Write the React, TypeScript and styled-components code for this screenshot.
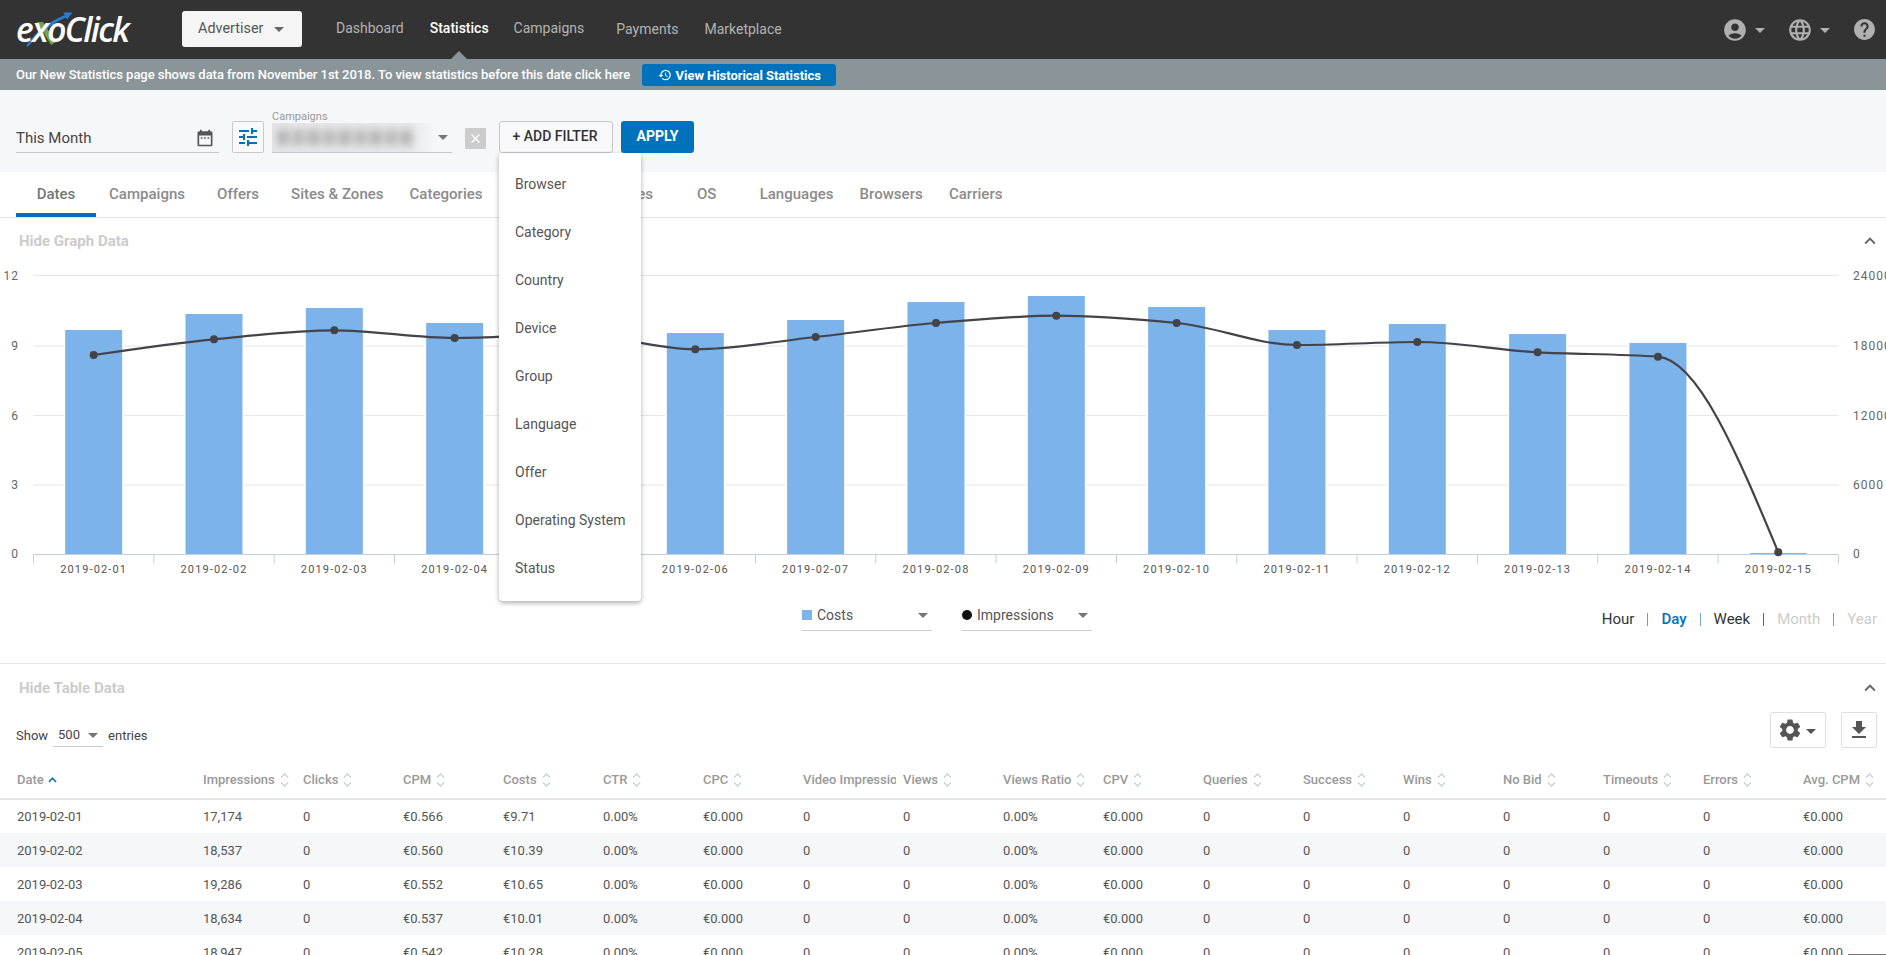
import React from "react";
import styled, { createGlobalStyle } from "styled-components";
import { MdAccountCircle, MdLanguage, MdHelp, MdSettings, MdFileDownload, MdTune, MdHistory, MdDateRange, MdClose, MdExpandLess } from "react-icons/md";

const Global = createGlobalStyle`
  html, body { margin: 0; padding: 0; height: 100%; overflow: hidden; background: #fff; }
  body { font-family: Roboto, "Liberation Sans", sans-serif; color: #444; }
  * { box-sizing: border-box; }
  #root { height: 100%; }
`;

const Page = styled.div`width: 1886px; height: 955px; overflow: hidden; position: relative; background: #fff;`;

const Header = styled.header`
  height: 59px; background: #333; display: flex; align-items: center; padding: 0 9px 0 16px;
`;
const LogoWrap = styled.div`
  position: relative; width: 166px; height: 40px; flex: none;
  svg { position: absolute; left: 0; top: 0; }
`;
const LogoText = styled.span`
  position: absolute; left: 0; top: -3px; font-family: "Open Sans", sans-serif; font-style: italic; font-weight: 600;
  font-size: 33.5px; letter-spacing: -1.7px; color: #fff; line-height: 44px;
`;
const ModeButton = styled.button`
  width: 120px; height: 36px; border: 0; border-radius: 3px; background: #f5f5f5; color: #555;
  font: 400 14.4px Roboto, sans-serif; display: flex; align-items: center; gap: 11px; padding: 0 0 0 16px; margin-bottom: 2px;
`;
const Caret = styled.i<{ $w?: number; $c?: string }>`
  display: inline-block; width: 0; height: 0; flex: none; margin-top: 2px;
  border-left: ${(p) => (p.$w ?? 10) / 2}px solid transparent;
  border-right: ${(p) => (p.$w ?? 10) / 2}px solid transparent;
  border-top: ${(p) => ((p.$w ?? 10) * 0.55).toFixed(1)}px solid ${(p) => p.$c ?? "#666"};
`;
const Nav = styled.nav`display: flex; margin-left: 34px; gap: 26px; align-items: center; margin-bottom: 3px;`;
const NavItem = styled.a<{ $active?: boolean; $extra?: number; $drop?: number }>`
  position: relative; font-size: 14px; color: ${(p) => (p.$active ? "#fff" : "#b3b3b3")};
  font-weight: ${(p) => (p.$active ? 500 : 400)};
  margin-right: ${(p) => p.$extra ?? 0}px; top: ${(p) => p.$drop ?? 0}px;
  ${(p) => p.$active && `&::after { content: ""; position: absolute; left: 50%; margin-left: -9px; bottom: -24px; border: 9px solid transparent; border-top: 0; border-bottom-color: #8a9599; }`}
`;
const HeaderIcons = styled.div`margin-left: auto; display: flex; align-items: center; color: #b0b0b0; svg { display: block; }`;
const IconGroup = styled.div<{ $gap?: number }>`display: flex; align-items: center; gap: 7px; margin-right: ${(p) => p.$gap ?? 0}px;`;

const SubBar = styled.div`
  height: 31px; background: #8a9599; color: #fff; display: flex; align-items: center; padding-left: 16px;
  font-size: 13px; font-weight: 500; gap: 12px; letter-spacing: -0.045px;
`;
const HistoryBtn = styled.a`
  width: 194px; height: 22px; border-radius: 3px; background: #0072bc; color: #fff; font-weight: 700; font-size: 13px;
  display: flex; align-items: center; justify-content: center; gap: 4px; margin-top: 1px;
`;

const FilterBar = styled.div`
  height: 82px; background: #f6f7f9; display: flex; align-items: flex-end; padding: 0 0 19px 16px;
`;
const DateField = styled.div`
  width: 203px; height: 32px; border-bottom: 1px solid #c4c6c9; display: flex; align-items: center; justify-content: space-between;
  font-size: 15px; color: #444; padding: 2px 4px 0 0; svg { color: #555; }
`;
const SlidersBtn = styled.button`
  width: 32px; height: 32px; margin-left: 13px; background: #f9f9fb; border: 1px solid #c8c8c8; border-radius: 2px; color: #0072bc;
  padding: 0; display: flex; align-items: center; justify-content: center;
`;
const SelectWrap = styled.div`margin-left: 8px; width: 180px; position: relative;`;
const SelectLabel = styled.div`position: absolute; left: 0; top: -11px; font-size: 11px; color: #999; line-height: 14px; z-index: 1;`;
const SelectField = styled.div`
  height: 32px; border-bottom: 1px solid #c4c6c9; display: flex; align-items: center; padding-right: 4px; justify-content: space-between;
`;
const BlurBox = styled.div`
  width: 163px; height: 29px; margin-top: 1px; overflow: hidden; background: linear-gradient(90deg, #e6e6e8, #e9e9eb 85%, #f6f7f9);
`;
const BlurInk = styled.div`
  width: 135px; height: 15px; margin: 7px 6px; filter: blur(4px);
  background: repeating-linear-gradient(90deg, #a8a8a8 0 9px, #dadada 9px 15px, #b4b4b4 15px 26px, #e0e0e0 26px 31px);
`;
const ClearBtn = styled.button`
  width: 21px; height: 21px; margin: 0 0 4px 13px; background: #ccc; border: 0; border-radius: 1px; color: #fff; padding: 0;
  display: flex; align-items: center; justify-content: center;
`;
const AddWrap = styled.div`position: relative; margin-left: 13px;`;
const AddBtn = styled.button`
  width: 114px; height: 32px; background: #f9f9fb; border: 1px solid #c8c8c8; border-radius: 3px; color: #333;
  font: 500 14px Roboto, sans-serif; padding: 0 2px 2px 0; display: block;
`;
const ApplyBtn = styled.button`
  width: 73px; height: 32px; margin-left: 8px; background: #0072bc; border: 0; border-radius: 3px; color: #fff;
  font: 700 14px Roboto, sans-serif; padding: 0 0 2px;
`;
const Menu = styled.div`
  position: absolute; left: 0; top: 32px; width: 142px; height: 448px; background: #fff; border-radius: 4px; z-index: 10;
  box-shadow: 0 2px 5px rgba(0,0,0,.32); padding-top: 7px;
`;
const MenuItem = styled.div`height: 48px; line-height: 48px; padding-left: 16px; font-size: 14px; color: #555; white-space: nowrap;`;

const Tabs = styled.div`display: flex; height: 46px; padding-left: 16px; border-bottom: 1px solid #e4e4e4;`;
const Tab = styled.div<{ $active?: boolean }>`
  height: 45px; min-width: 80px; padding: 2px 13px 0; display: flex; align-items: center; justify-content: center;
  font-size: 15px; font-weight: 500; letter-spacing: 0.02px; color: ${(p) => (p.$active ? "#777" : "#8b8b8b")}; white-space: nowrap;
  border-bottom: 4px solid ${(p) => (p.$active ? "#0072bc" : "transparent")};
`;

const Section = styled.section`border-bottom: 1px solid #e4e4e4; height: 446px; display: flex; flex-direction: column;`;
const SectionHead = styled.div<{ $h: number; $lift?: number }>`
  height: ${(p) => p.$h}px; flex: none; display: flex; align-items: center; justify-content: space-between; padding: 0 5px ${(p) => p.$lift ?? 0}px 19px;
  font-size: 15px; font-weight: 700; color: #ccc; svg { color: #666; display: block; }
`;
const Chart = styled.svg`display: block; flex: none;`;
const AxisText = styled.text`font: 400 11px Roboto, sans-serif; letter-spacing: 1.15px; fill: #555;`;
const YText = styled.text`font: 400 12px Roboto, sans-serif; letter-spacing: 1px; fill: #666;`;

const Controls = styled.div`display: flex; align-items: flex-start; flex: 1;`;
const LegendItem = styled.div<{ $first?: boolean }>`
  width: 130px; height: 30px; margin: 6px 0 0 ${(p) => (p.$first ? 802 : 30)}px; border-bottom: 1px solid #ccc;
  display: flex; align-items: center; font-size: 14px; color: #555; padding: 0 4px 2px 0;
  span { flex: 1; margin-left: 5px; }
`;
const SwatchSquare = styled.i`width: 10px; height: 10px; background: #7cb3eb; flex: none;`;
const SwatchDot = styled.i`width: 10px; height: 10px; background: #111; border-radius: 50%; flex: none;`;
const Range = styled.div`
  margin: 14px 9px 0 auto; display: flex; align-items: center; height: 20px; font-size: 15px; gap: 13px;
`;
const RangeOpt = styled.span<{ $tone: "on" | "sel" | "off" }>`
  color: ${(p) => (p.$tone === "on" ? "#333" : p.$tone === "sel" ? "#0072bc" : "#ccc")};
  font-weight: ${(p) => (p.$tone === "sel" ? 500 : 400)};
`;
const RangeSep = styled.i<{ $c: string }>`width: 1px; height: 13px; background: ${(p) => p.$c};`;

const ToolRow = styled.div`height: 36px; display: flex; align-items: flex-end; padding: 0 9px 0 16px; font-size: 13px; color: #444;`;
const ShowGroup = styled.div`display: flex; align-items: center; height: 24px; margin-bottom: 1px;`;
const ShowSelect = styled.div`
  width: 50px; height: 24px; margin: 0 5px; padding: 0 5px; border-bottom: 1px solid #ccc;
  display: flex; align-items: center; justify-content: space-between;
`;
const ToolBtn = styled.button<{ $w: number; $ml: string }>`
  width: ${(p) => p.$w}px; height: 36px; margin-left: ${(p) => p.$ml}; background: #fff; border: 1px solid #e0e0e0; border-radius: 2px; color: #555; padding: 0;
  display: flex; align-items: center; justify-content: center;
`;
const GearBtn = styled(ToolBtn)`justify-content: flex-start; padding-left: 6px; gap: 3px;`;
const TableWrap = styled.div`margin-top: 13px;`;
const Table = styled.table`table-layout: fixed; width: 1903px; border-collapse: collapse; font-size: 13px;`;
const Th = styled.th<{ $w: number; $first?: boolean }>`
  width: ${(p) => p.$w}px; height: 38px; text-align: left; font-weight: 500; color: #999; padding: 0 0 0 ${(p) => (p.$first ? 17 : 0)}px;
  border-bottom: 2px solid #e4e4e4;
`;
const HeadInner = styled.div`display: flex; align-items: center; gap: 5px; overflow: hidden; white-space: nowrap; max-width: 93px; b { font-weight: 500; flex: none; } svg { flex: none; }`;
const Row = styled.tr<{ $alt: boolean }>`height: 34px; background: ${(p) => (p.$alt ? "#f6f7f9" : "#fff")};`;
const Td = styled.td<{ $first?: boolean }>`padding: 0 0 0 ${(p) => (p.$first ? 17 : 0)}px; color: #555; white-space: nowrap;`;
const CornerLine = styled.div`position: absolute; right: 0; bottom: 0; width: 38px; height: 1px; background: #777;`;
const SortUpIcon = styled.svg`margin-left: -1px;`;

const Sort = () => (
  <svg width="9" height="16" viewBox="0 0 9 16" fill="none" stroke="#c6d0d6" strokeWidth="1.3">
    <path d="M1 5.5 4.5 2 8 5.5M1 10.5 4.5 14 8 10.5" />
  </svg>
);
const SortUp = () => (
  <SortUpIcon width="9" height="8" viewBox="0 0 9 8" fill="none" stroke="#0072bc" strokeWidth="1.6">
    <path d="M1 6 4.5 2.2 8 6" />
  </SortUpIcon>
);

const Logo = () => (
  <LogoWrap>
    <svg width="120" height="44" viewBox="0 0 120 44">
      <path d="M21 12 27 12 40 32 35 35Z" fill="#6ea544" />
      <path d="M10 36 C16 27 30 12 49 5 L47 2.500 L56.500 2.500 L51 9.500 L50 7.500 C34 14 22 26 12 36.500Z" fill="#2f7ad0" />
    </svg>
    <LogoText>exoClick</LogoText>
  </LogoWrap>
);

const N = 15;
const X0 = 33.5;
const STEP = 120.33;
const TOP = 265;
const cx = (i: number) => X0 + STEP * (i + 0.5);
const barTops = [330, 314, 308, 323, 317, 333, 320, 302, 296, 307, 330, 324, 334, 343, 553];
const pts = [355, 339.3, 330.3, 338, 334.4, 349.3, 337, 323, 315.7, 323, 345, 342, 352.3, 356.7, 552.3];
const grid = [275.5, 346, 415.5, 485];
const leftLabels = ["12", "9", "6", "3", "0"];
const rightLabels = ["24000", "18000", "12000", "6000", "0"];

function monotonePath(ys: number[]) {
  const h = STEP;
  const s = ys.slice(1).map((y, i) => (y - ys[i]) / h);
  const m = ys.map((_, i) => {
    if (i === 0 || i === ys.length - 1) return 0;
    const a = s[i - 1];
    const b = s[i];
    if (a * b <= 0) return 0;
    return (2 * a * b) / (a + b);
  });
  m[0] = (3 * s[0] - m[1]) / 2;
  m[ys.length - 1] = (3 * s[ys.length - 2] - m[ys.length - 2]) / 2;
  let d = `M${cx(0)} ${ys[0] - TOP}`;
  for (let i = 0; i < ys.length - 1; i++) {
    d += `C${cx(i) + h / 3} ${ys[i] - TOP + (m[i] * h) / 3} ${cx(i + 1) - h / 3} ${ys[i + 1] - TOP - (m[i + 1] * h) / 3} ${cx(i + 1)} ${ys[i + 1] - TOP}`;
  }
  return d;
}

const GraphChart = () => {
  const axis = 554 - TOP + 0.5;
  const dates = Array.from({ length: N }, (_, i) => `2019-02-${String(i + 1).padStart(2, "0")}`);
  return (
    <Chart width="1886" height="330" viewBox="0 0 1886 330">
      {grid.map((y) => (
        <line key={y} x1={X0} x2={X0 + STEP * N} y1={y - TOP} y2={y - TOP} stroke="#e6e6e6" strokeWidth="1" />
      ))}
      {barTops.map((t, i) => (
        <React.Fragment key={i}>
          <rect x={cx(i) - 30} y={t - TOP - 1} width="60" height={555 - t} fill="#fff" />
          <rect x={cx(i) - 28.5} y={t - TOP} width="57" height={554 - t} fill="#7cb3eb" />
        </React.Fragment>
      ))}
      <line x1={X0} x2={X0 + STEP * N} y1={axis} y2={axis} stroke="#c0d0e0" />
      {Array.from({ length: N + 1 }, (_, i) => (
        <line key={i} x1={X0 + STEP * i} x2={X0 + STEP * i} y1={axis} y2={axis + 9} stroke="#c0d0e0" />
      ))}
      <path d={monotonePath(pts)} fill="none" stroke="#434348" strokeWidth="2.2" />
      {pts.map((y, i) => (
        <circle key={i} cx={cx(i)} cy={y - TOP} r="4" fill="#434348" />
      ))}
      {dates.map((d, i) => (
        <AxisText key={d} x={cx(i)} y={308} textAnchor="middle">{d}</AxisText>
      ))}
      {[...grid, 554].map((y, i) => (
        <YText key={`l${i}`} x={19} y={y - TOP + 4} textAnchor="end">{leftLabels[i]}</YText>
      ))}
      {[...grid, 554].map((y, i) => (
        <YText key={`r${i}`} x={1853} y={y - TOP + 4}>{rightLabels[i]}</YText>
      ))}
    </Chart>
  );
};

const menuItems = ["Browser", "Category", "Country", "Device", "Group", "Language", "Offer", "Operating System", "Status"];
const tabs = ["Dates", "Campaigns", "Offers", "Sites & Zones", "Categories", "Countries", "Devices", "OS", "Languages", "Browsers", "Carriers"];
const cols = ["Date", "Impressions", "Clicks", "CPM", "Costs", "CTR", "CPC", "Video Impressions", "Views", "Views Ratio", "CPV", "Queries", "Success", "Wins", "No Bid", "Timeouts", "Errors", "Avg. CPM"];
const rows: [string, string, string, string][] = [
  ["2019-02-01", "17,174", "€0.566", "€9.71"],
  ["2019-02-02", "18,537", "€0.560", "€10.39"],
  ["2019-02-03", "19,286", "€0.552", "€10.65"],
  ["2019-02-04", "18,634", "€0.537", "€10.01"],
  ["2019-02-05", "18,947", "€0.542", "€10.28"],
];

export default function App() {
  return (
    <Page>
      <Global />
      <Header>
        <Logo />
        <ModeButton>Advertiser <Caret $w={10} $c="#666" /></ModeButton>
        <Nav>
          <NavItem>Dashboard</NavItem>
          <NavItem $active $extra={-1}>Statistics</NavItem>
          <NavItem $extra={6}>Campaigns</NavItem>
          <NavItem $drop={1}>Payments</NavItem>
          <NavItem $drop={1}>Marketplace</NavItem>
        </Nav>
        <HeaderIcons>
          <IconGroup $gap={22}>
            <MdAccountCircle size={26} />
            <Caret $w={10} $c="#b0b0b0" />
          </IconGroup>
          <IconGroup $gap={22}>
            <MdLanguage size={26} />
            <Caret $w={10} $c="#b0b0b0" />
          </IconGroup>
          <MdHelp size={25} />
        </HeaderIcons>
      </Header>
      <SubBar>
        Our New Statistics page shows data from November 1st 2018. To view statistics before this date click here
        <HistoryBtn><MdHistory size={14} /> View Historical Statistics</HistoryBtn>
      </SubBar>
      <FilterBar>
        <DateField>This Month <MdDateRange size={20} /></DateField>
        <SlidersBtn><MdTune size={24} /></SlidersBtn>
        <SelectWrap>
          <SelectLabel>Campaigns</SelectLabel>
          <SelectField>
            <BlurBox><BlurInk /></BlurBox>
            <Caret $w={10} $c="#777" />
          </SelectField>
        </SelectWrap>
        <ClearBtn><MdClose size={15} /></ClearBtn>
        <AddWrap>
          <AddBtn>+ ADD FILTER</AddBtn>
          <Menu>
            {menuItems.map((m) => <MenuItem key={m}>{m}</MenuItem>)}
          </Menu>
        </AddWrap>
        <ApplyBtn>APPLY</ApplyBtn>
      </FilterBar>
      <Tabs>
        {tabs.map((t, i) => <Tab key={t} $active={i === 0}>{t}</Tab>)}
      </Tabs>
      <Section>
        <SectionHead $h={47} $lift={2}>Hide Graph Data <MdExpandLess size={22} /></SectionHead>
        <GraphChart />
        <Controls>
          <LegendItem $first><SwatchSquare /><span>Costs</span><Caret $w={10} $c="#777" /></LegendItem>
          <LegendItem><SwatchDot /><span>Impressions</span><Caret $w={10} $c="#777" /></LegendItem>
          <Range>
            <RangeOpt $tone="on">Hour</RangeOpt><RangeSep $c="#c98a3a" />
            <RangeOpt $tone="sel">Day</RangeOpt><RangeSep $c="#7aa6c9" />
            <RangeOpt $tone="on">Week</RangeOpt><RangeSep $c="#666" />
            <RangeOpt $tone="off">Month</RangeOpt><RangeSep $c="#c98a3a" />
            <RangeOpt $tone="off">Year</RangeOpt>
          </Range>
        </Controls>
      </Section>
      <SectionHead $h={48}>Hide Table Data <MdExpandLess size={22} /></SectionHead>
      <ToolRow>
        <ShowGroup>
          Show
          <ShowSelect>500 <Caret $w={10} $c="#777" /></ShowSelect>
          entries
        </ShowGroup>
        <GearBtn $w={56} $ml="auto"><MdSettings size={26} /><Caret $w={10} $c="#555" /></GearBtn>
        <ToolBtn $w={36} $ml="15px"><MdFileDownload size={24} /></ToolBtn>
      </ToolRow>
      <TableWrap>
        <Table>
          <colgroup>
            {cols.map((c, i) => <col key={c} width={i === 0 ? 203 : 100} />)}
          </colgroup>
          <thead>
            <tr>
              {cols.map((c, i) => (
                <Th key={c} $w={i === 0 ? 203 : 100} $first={i === 0}>
                  <HeadInner><b>{c}</b>{i === 0 ? <SortUp /> : <Sort />}</HeadInner>
                </Th>
              ))}
            </tr>
          </thead>
          <tbody>
            {rows.map((r, i) => (
              <Row key={r[0]} $alt={i % 2 === 1}>
                <Td $first>{r[0]}</Td>
                <Td>{r[1]}</Td>
                <Td>0</Td>
                <Td>{r[2]}</Td>
                <Td>{r[3]}</Td>
                <Td>0.00%</Td>
                <Td>€0.000</Td>
                <Td>0</Td>
                <Td>0</Td>
                <Td>0.00%</Td>
                <Td>€0.000</Td>
                <Td>0</Td>
                <Td>0</Td>
                <Td>0</Td>
                <Td>0</Td>
                <Td>0</Td>
                <Td>0</Td>
                <Td>€0.000</Td>
              </Row>
            ))}
          </tbody>
        </Table>
      </TableWrap>
      <CornerLine />
    </Page>
  );
}
